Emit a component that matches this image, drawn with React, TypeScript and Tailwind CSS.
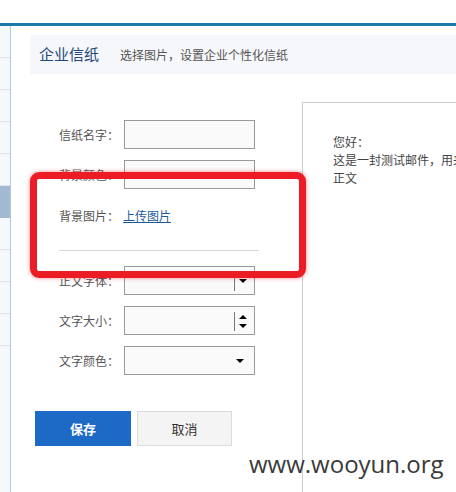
import React from 'react';

const sideItems = [0, 1, 2, 3, 4, 5, 6, 7, 8, 9];

const Caret: React.FC = () => (
  <span className="block w-0 h-0 border-l-[4px] border-r-[4px] border-t-[4px] border-l-transparent border-r-transparent border-t-black" />
);

const CaretUp: React.FC = () => (
  <span className="block w-0 h-0 border-l-[4px] border-r-[4px] border-b-[4px] border-l-transparent border-r-transparent border-b-black" />
);

const Row: React.FC<{ label: string; children: React.ReactNode; className?: string }> = ({ label, children, className }) => (
  <div className={`flex items-center h-[29px] ${className || ''}`}>
    <span className="w-[65px] text-[12px] text-[#555]">{label}</span>
    {children}
  </div>
);

const Box: React.FC<{ children?: React.ReactNode }> = ({ children }) => (
  <div className="relative w-[131px] h-[29px] border border-[#9a9a9a] bg-[#fafafa]">{children}</div>
);

export default function App() {
  return (
    <div
      className="relative w-[456px] h-[492px] overflow-hidden bg-white flex flex-col"
      style={{ fontFamily: '"Noto Sans CJK SC", "Microsoft YaHei", sans-serif' }}
    >
      <div className="h-[23px] shrink-0" />
      <div className="h-[3px] shrink-0 bg-[#1b78a8]" />

      <div className="flex flex-1 min-h-0">
        {/* 左侧菜单 */}
        <div className="w-[11px] shrink-0 bg-[#f6f9fb] border-r border-[#a9cde0]">
          {sideItems.map((i) => (
            <div
              key={i}
              className={`h-[32px] ${i === 5 ? 'bg-[#a3b9d3]' : 'border-b border-[#dde4eb]'}`}
            />
          ))}
        </div>

        <div className="flex-1 flex flex-col pt-[9px] pl-[19px]">
          {/* 标题栏 */}
          <div className="h-[39px] bg-[#f5f7fa] flex items-center pl-[9px]">
            <span className="text-[15px] text-[#23497a]">企业信纸</span>
            <span className="ml-[21px] text-[12px] text-[#555]">选择图片，设置企业个性化信纸</span>
          </div>

          <div className="flex flex-1 min-h-0">
            {/* 表单 */}
            <div className="w-[272px] shrink-0 pt-[46px]">
              <div className="pl-[29px]">
                <Row label="信纸名字：">
                  <Box />
                </Row>
                <Row label="背景颜色：" className="mt-[11px]">
                  <Box />
                </Row>
                <Row label="背景图片：" className="mt-[12px]">
                  <a className="text-[12px] text-[#1c5a9c] underline -ml-[1px]">上传图片</a>
                </Row>
                <div className="mt-[20px] w-[200px] h-px bg-[#d8d8d8]" />
                <Row label="正文字体：" className="mt-[15px]">
                  <Box>
                    <span className="absolute left-[109px] top-[5px] h-[19px] w-px bg-[#777]" />
                    <span className="absolute left-[114px] top-[12px]">
                      <Caret />
                    </span>
                  </Box>
                </Row>
                <Row label="文字大小：" className="mt-[11px]">
                  <Box>
                    <span className="absolute left-[109px] top-[5px] h-[19px] w-px bg-[#777]" />
                    <span className="absolute left-[114px] top-[8px]">
                      <CaretUp />
                    </span>
                    <span className="absolute left-[114px] top-[17px]">
                      <Caret />
                    </span>
                  </Box>
                </Row>
                <Row label="文字颜色：" className="mt-[11px]">
                  <Box>
                    <span className="absolute left-[111px] top-[12px]">
                      <Caret />
                    </span>
                  </Box>
                </Row>
              </div>

              <div className="flex mt-[36px] pl-[5px] gap-[6px]">
                <button className="w-[96px] h-[35px] bg-[#1d6ac6] text-white text-[13px] font-bold">
                  保存
                </button>
                <button className="w-[95px] h-[35px] bg-[#f4f4f4] border border-[#dcdcdc] text-[#333] text-[13px]">
                  取消
                </button>
              </div>
            </div>

            {/* 预览 */}
            <div className="flex-1 mt-[28px] border-l border-t border-[#cccccc] pt-[30px] pl-[30px] overflow-hidden">
              <div className="text-[12px] leading-[18px] text-[#444] whitespace-nowrap">
                <p>您好：</p>
                <p>这是一封测试邮件，用来预览信纸效果</p>
                <p>正文</p>
              </div>
            </div>
          </div>
        </div>
      </div>

      {/* 红框标注 */}
      <div className="absolute left-[30px] top-[172px] w-[276px] h-[106px] border-[7px] border-[#ec1c24] rounded-[9px] shadow-[0_0_4px_rgba(236,28,36,0.5)]" />

      {/* 水印 */}
      <div
        className="absolute left-[249px] top-[446px] text-[24px] text-[#3a3a3a]"
        style={{ fontFamily: '"Open Sans", sans-serif' }}
      >
        www.wooyun.org
      </div>
    </div>
  );
}
